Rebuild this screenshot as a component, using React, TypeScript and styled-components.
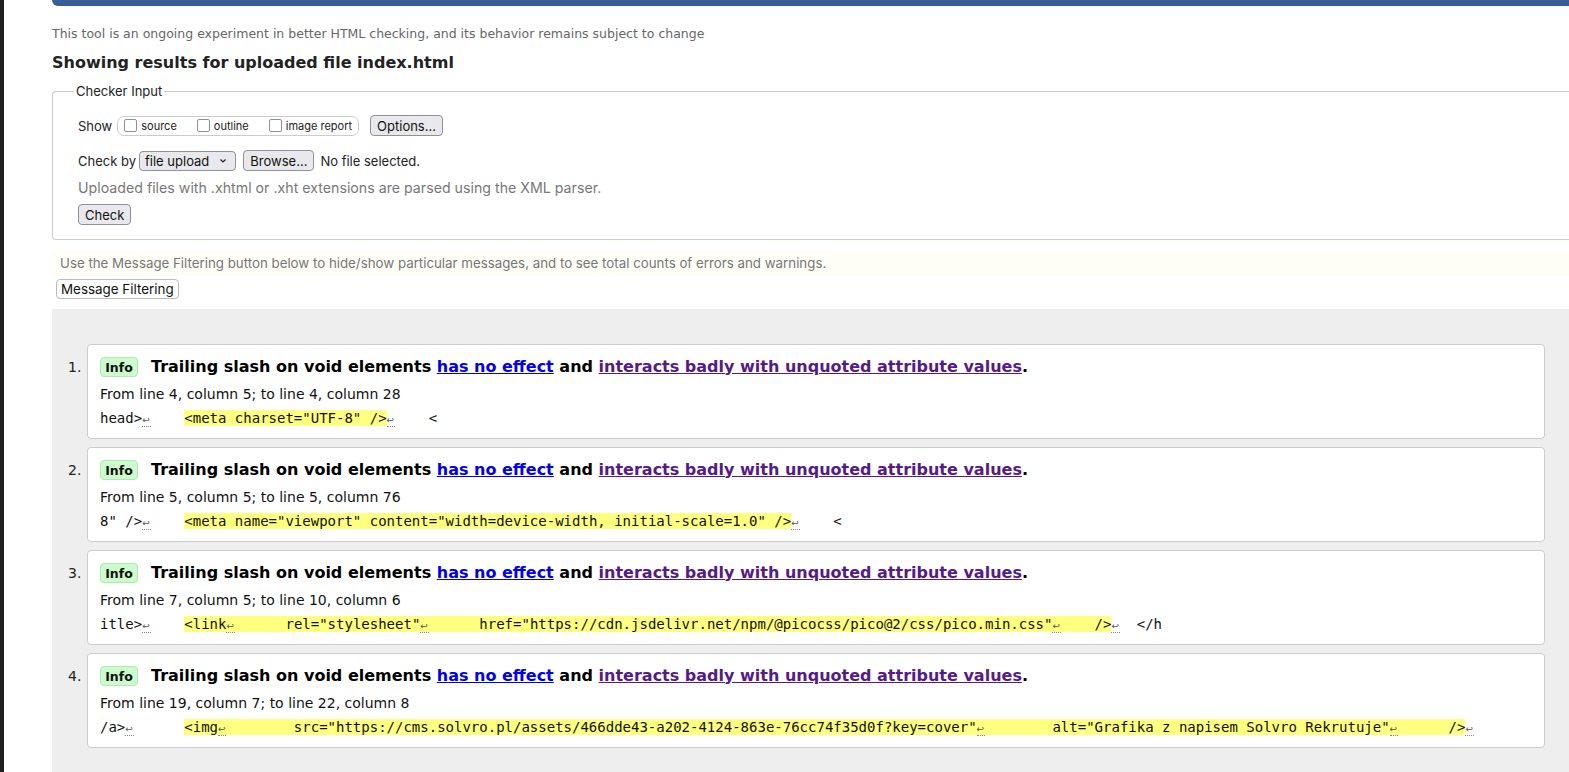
import React from 'react';
import styled, { createGlobalStyle } from 'styled-components';

const Global = createGlobalStyle`
  html, body { margin: 0; padding: 0; background: #fff; overflow: hidden; }
  body { font-family: "DejaVu Sans", sans-serif; color: #222; }
  * { box-sizing: border-box; }
`;

const Frame = styled.div`
  display: flex;
  min-height: 772px;
`;

const Edge = styled.div`
  flex: none;
  width: 4px;
  background: #1f1f1f;
`;

const Page = styled.div`
  flex: 1;
  min-width: 0;
  padding-left: 48px;
  margin-right: -40px;
`;

const TopBar = styled.div`
  height: 6px;
  background: #365d96;
  border-bottom-left-radius: 6px;
`;

const Intro = styled.p`
  margin: 20px 0 0;
  font-size: 12.5px;
  line-height: 16px;
  color: #666;
`;

const Title = styled.h2`
  margin: 11px 0 0;
  font-size: 16px;
  line-height: 20px;
  font-weight: bold;
  color: #222;
`;

const Fieldset = styled.fieldset`
  margin: 10px 0 0;
  padding: 16px 0 14px 25px;
  border: 1px solid #ccc;
  border-right: none;
  border-radius: 4px 0 0 4px;
  font-family: Inter, "Noto Sans", sans-serif;
  font-size: 13px;
  color: #222;
`;

const Legend = styled.legend`
  margin-left: -4px;
  padding: 0 2px;
  font-size: 13px;
  line-height: 16px;
  color: #222;
`;

const Row = styled.div<{ $top?: number }>`
  display: flex;
  align-items: center;
  height: 21px;
  margin-top: ${(p) => p.$top ?? 0}px;
  white-space: nowrap;
`;

const Label = styled.span<{ $ml?: number }>`
  font-size: 13px;
  margin-left: ${(p) => p.$ml ?? 0}px;
`;

const ShowGroup = styled.div`
  display: flex;
  align-items: center;
  height: 20px;
  margin-left: 5px;
  padding: 0 6px 0 6px;
  border: 1px solid #ccc;
  border-radius: 7px;
  gap: 20px;
`;

const Opt = styled.label`
  display: flex;
  align-items: center;
  gap: 4px;
  font-size: 11px;
  color: #222;
`;

const Box = styled.span`
  display: inline-block;
  width: 13px;
  height: 13px;
  border: 1px solid #8f8f9d;
  border-radius: 2px;
  background: #fff;
`;

const Btn = styled.span<{ $ml?: number }>`
  display: inline-flex;
  align-items: center;
  height: 21px;
  padding: 0 6px;
  margin-left: ${(p) => p.$ml ?? 0}px;
  background: #e9e9ed;
  border: 1px solid #8f8f9d;
  border-radius: 4px;
  font-size: 13px;
  color: #111;
`;

const Select = styled(Btn)`
  height: 20px;
  gap: 10px;
  padding: 0 8px 0 5px;
`;

const Note = styled.p`
  margin: 8px 0 0;
  font-size: 14.2px;
  line-height: 18px;
  color: #777;
`;

const Filters = styled.div`
  margin-top: 10px;
  height: 26px;
  padding-left: 8px;
  display: flex;
  align-items: center;
  background: #fffef6;
  font-family: Inter, "Noto Sans", sans-serif;
  font-size: 13.3px;
  color: #777;
`;

const FilterBtn = styled.span`
  display: inline-flex;
  align-items: center;
  height: 20px;
  margin: 3px 0 0 4px;
  padding: 0 4px;
  border: 1px solid #bbb;
  border-radius: 4px;
  background: #fff;
  font-family: Inter, "Noto Sans", sans-serif;
  font-size: 13.4px;
  color: #111;
`;

const Results = styled.ol`
  list-style: none;
  margin: 10px 0 0;
  padding: 35px 64px 20px 16px;
  background: #eee;
  min-height: 470px;
`;

const Item = styled.li`
  display: flex;
  margin-bottom: 8px;
`;

const Num = styled.span`
  flex: none;
  width: 19px;
  margin-top: 13px;
  font-size: 14px;
  line-height: 20px;
  color: #222;
`;

const Card = styled.div`
  flex: 1;
  height: 95px;
  padding: 12px 12px 0 12px;
  background: #fff;
  border: 1px solid #ccc;
  border-radius: 4px;
`;

const Head = styled.div`
  display: flex;
  align-items: center;
  height: 20px;
  gap: 13px;
  white-space: nowrap;
`;

const Badge = styled.span`
  display: inline-flex;
  align-items: center;
  justify-content: center;
  width: 38px;
  height: 20px;
  background: #ccfccc;
  border: 1px solid #b6e6b6;
  border-radius: 4px;
  font-size: 12.5px;
  font-weight: bold;
  color: #111;
`;

const Msg = styled.span`
  font-size: 16px;
  font-weight: bold;
  color: #000;
  margin-top: -2px;
`;

const Link = styled.a<{ $visited?: boolean }>`
  color: ${(p) => (p.$visited ? '#551a8b' : '#0000ee')};
  text-decoration: underline;
`;

const Loc = styled.p`
  margin: 8px 0 0;
  font-size: 14px;
  line-height: 18px;
  color: #111;
`;

const Code = styled.code`
  display: block;
  margin-top: 6px;
  font-family: "DejaVu Sans Mono", monospace;
  font-size: 14px;
  line-height: 18px;
  white-space: pre;
  color: #111;
`;

const Hl = styled.mark`
  background: #ffff80;
  color: #111;
`;

const Lf = styled.span`
  display: inline-block;
  width: 8.43px;
  font-family: "DejaVu Sans", sans-serif;
  font-size: 9px;
  line-height: 11px;
  color: #555;
  border-bottom: 1px dotted #888;
`;

const renderCode = (s: string) =>
  s.split('↩').flatMap((chunk, i, arr) =>
    i < arr.length - 1 ? [chunk, <Lf key={i} title="Line break">↩</Lf>] : [chunk]
  );

const messages = [
  {
    loc: 'From line 4, column 5; to line 4, column 28',
    pre: 'head>↩    ',
    hl: '<meta charset="UTF-8" />',
    post: '↩    <',
  },
  {
    loc: 'From line 5, column 5; to line 5, column 76',
    pre: '8" />↩    ',
    hl: '<meta name="viewport" content="width=device-width, initial-scale=1.0" />',
    post: '↩    <',
  },
  {
    loc: 'From line 7, column 5; to line 10, column 6',
    pre: 'itle>↩    ',
    hl: '<link↩      rel="stylesheet"↩      href="https://cdn.jsdelivr.net/npm/@picocss/pico@2/css/pico.min.css"↩    />',
    post: '↩  </h',
  },
  {
    loc: 'From line 19, column 7; to line 22, column 8',
    pre: '/a>↩      ',
    hl: '<img↩        src="https://cms.solvro.pl/assets/466dde43-a202-4124-863e-76cc74f35d0f?key=cover"↩        alt="Grafika z napisem Solvro Rekrutuje"↩      />',
    post: '↩',
  },
];

const Chevron = () => (
  <svg width="8" height="6" viewBox="0 0 8 6" aria-hidden>
    <polyline points="1.5,1.5 4,4 6.5,1.5" fill="none" stroke="#222" strokeWidth="1.2" />
  </svg>
);

export default function App() {
  return (
    <>
      <Global />
      <Frame>
        <Edge />
        <Page>
          <TopBar />
          <Intro>This tool is an ongoing experiment in better HTML checking, and its behavior remains subject to change</Intro>
          <Title>Showing results for uploaded file index.html</Title>
          <Fieldset>
            <Legend>Checker Input</Legend>
            <Row>
              <Label>Show</Label>
              <ShowGroup>
                <Opt><Box />source</Opt>
                <Opt><Box />outline</Opt>
                <Opt><Box />image report</Opt>
              </ShowGroup>
              <Btn $ml={11}>Options...</Btn>
            </Row>
            <Row $top={14}>
              <Label>Check by</Label>
              <Select $ml={3}>file upload <Chevron /></Select>
              <Btn $ml={7}>Browse...</Btn>
              <Label $ml={6}>No file selected.</Label>
            </Row>
            <Note>Uploaded files with .xhtml or .xht extensions are parsed using the XML parser.</Note>
            <Row $top={7}>
              <Btn>Check</Btn>
            </Row>
          </Fieldset>
          <Filters>Use the Message Filtering button below to hide/show particular messages, and to see total counts of errors and warnings.</Filters>
          <FilterBtn>Message Filtering</FilterBtn>
          <Results>
            {messages.map((m, i) => (
              <Item key={i}>
                <Num>{i + 1}.</Num>
                <Card>
                  <Head>
                    <Badge>Info</Badge>
                    <Msg>
                      Trailing slash on void elements <Link href="#">has no effect</Link> and{' '}
                      <Link href="#" $visited>interacts badly with unquoted attribute values</Link>.
                    </Msg>
                  </Head>
                  <Loc>{m.loc}</Loc>
                  <Code>
                    {renderCode(m.pre)}
                    <Hl>{renderCode(m.hl)}</Hl>
                    {renderCode(m.post)}
                  </Code>
                </Card>
              </Item>
            ))}
          </Results>
        </Page>
      </Frame>
    </>
  );
}
